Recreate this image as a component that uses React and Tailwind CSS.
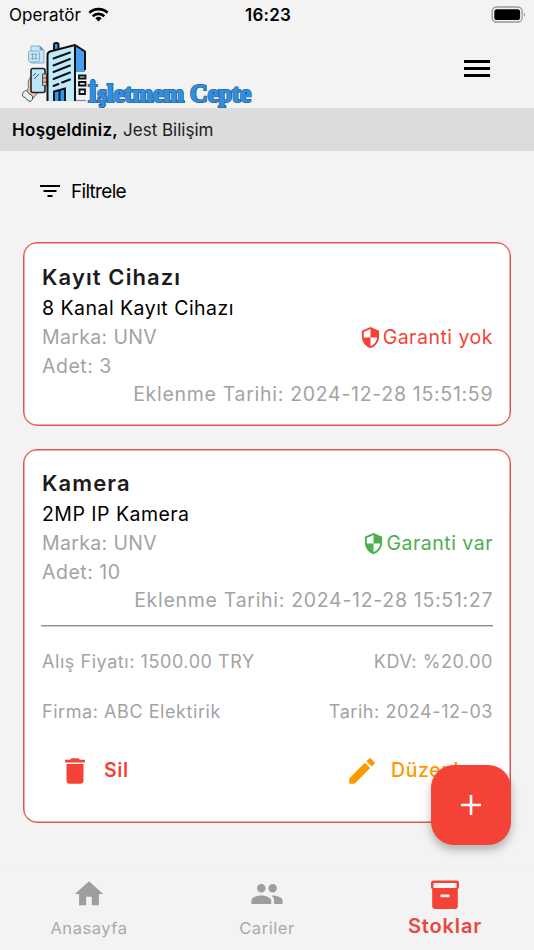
import React from "react";

function Icon({ className, children, viewBox = "0 0 24 24" }) {
  return (
    <svg viewBox={viewBox} className={className} fill="currentColor" aria-hidden="true">
      {children}
    </svg>
  );
}

function StatusBar() {
  return (
    <div className="flex h-[31px] items-center justify-between pl-[9px] pr-[7px] text-black">
      <div className="flex w-[120px] items-center gap-[7px]">
        <span className="text-[17px] tracking-[0.1px]">Operatör</span>
        <svg viewBox="0 0 22 16" className="mb-[2px] h-[15px] w-[21px]" fill="none" stroke="#000" strokeWidth="2.9">
          <path d="M1.3 6.2a14 14 0 0 1 19.4 0" />
          <path d="M4.8 9.8a9 9 0 0 1 12.4 0" />
          <path d="M7.6 11.9a5 5 0 0 1 6.8 0L11 15.5z" fill="#000" stroke="none" />
        </svg>
      </div>
      <span className="text-[17px] font-semibold tracking-[0.2px]">16:23</span>
      <div className="flex w-[120px] items-center justify-end pb-[3px]">
        <svg viewBox="0 0 36 17" className="h-[17px] w-9">
          <rect x="1.2" y="1" width="30" height="15" rx="4.5" fill="none" stroke="#999" strokeWidth="1.3" />
          <rect x="3.3" y="3.2" width="25.8" height="10.8" rx="2.6" fill="#000" />
          <path d="M33 6.5v4.400c1.400-.6 1.400-3.800 0-4.400z" fill="#999" />
        </svg>
      </div>
    </div>
  );
}

function Logo() {
  return (
    <svg viewBox="0 0 240 70" className="h-[70px] w-[240px]">
      <g stroke="#7fa9bd" strokeWidth="0.9" fill="#c4e8f8">
        <path d="M16 8h9l4 4v13h-13z" />
        <path d="M25 8v4h4z" fill="#4a9be0" />
        <rect x="13.500" y="13" width="11" height="11" rx="2" />
        <path d="M15.500 16.500h7M15.500 20.500h7M17.500 15v7M21 15v7" fill="none" />
      </g>
      <path d="M15.500 39c-2 3-3 5-2 10l-2 6 6 6 5-6 5-2V42z" fill="#f8c3ae" stroke="#555" strokeWidth="0.8" />
      <path d="M9.500 53c3-2 3 2 5 3s4 2 3 5-4 3-6 0-4-1-4-4c0-2 1-3 2-4z" fill="#e3f5fc" stroke="#333" strokeWidth="0.9" />
      <rect x="16" y="30.500" width="14" height="24" rx="2" fill="#b9e7f8" stroke="#222" strokeWidth="1.600" />
      <path d="M18 38l3-3M19 41l5-5" stroke="#446" strokeWidth="0.9" />
      <path d="M27.500 36h4v11.500h-4zM27.500 40h4M27.500 44h4" fill="#f8b49c" stroke="#444" strokeWidth="0.9" />
      <rect x="39" y="5" width="4.500" height="9" rx="1.800" fill="#3297ee" stroke="#111" strokeWidth="1.900" />
      <path d="M32.500 63V17c0-2 1-3 2.500-3.500L60 7v56z" fill="#bfeafb" />
      <path d="M60 7l10 7v20H60z" fill="#459ff0" />
      <path d="M60 34h10v29H60z" fill="#e8f2f8" />
      <path d="M32.500 63V17c0-2 1-3 2.500-3.500L60 7l10 6.500V32M60 7v56" fill="none" stroke="#111" strokeWidth="2" strokeLinejoin="round" />
      <path d="M38.500 20.500L55 14.500M38.500 27.500L55 21M38.500 34L55 27.500M38.500 41L55 34.500M38.500 48l5-2M47 44.500l8-3" fill="none" stroke="#111" strokeWidth="2" strokeLinecap="round" />
      <path d="M39 63V53.500l11-3v12.500M44.500 52V63" fill="#3297ee" stroke="#111" strokeWidth="1.900" />
      <path d="M64 37.500v3h6.500v-3zM64 44v3.500h6.500V44zM64.500 51.500h5.500v4.500h-5.500z" fill="none" stroke="#111" strokeWidth="1.800" />
      <path d="M61 62.500h10" stroke="#888" strokeWidth="1.200" />
      <text
        x="73"
        y="64"
        textLength="163"
        lengthAdjust="spacingAndGlyphs"
        fontFamily="Liberation Serif, serif"
        fontWeight="700"
        fontSize="25"
        fill="#2f90e0"
        stroke="#24507c"
        strokeWidth="2.200"
        paintOrder="stroke"
      >
        İşletmem Cepte
      </text>
      <text
        x="73"
        y="64"
        textLength="163"
        lengthAdjust="spacingAndGlyphs"
        fontFamily="Liberation Serif, serif"
        fontWeight="700"
        fontSize="25"
        fill="#2f90e0"
        stroke="#2f90e0"
        strokeWidth="0.8"
        aria-hidden="true"
      >
        İşletmem Cepte
      </text>
    </svg>
  );
}

function Header() {
  return (
    <header className="flex h-[77px] items-start justify-between pl-[15px] pr-[44px] pt-[7px]">
      <Logo />
      <button aria-label="Menü" className="mt-[22px] flex w-[26px] flex-col gap-1">
        <span className="h-[3px] bg-black" />
        <span className="h-[3px] bg-black" />
        <span className="h-[3px] bg-black" />
      </button>
    </header>
  );
}

function ItemSummary({ title, name, count, date, warranty }) {
  return (
    <div className="text-[19.5px] leading-[28.5px] tracking-[0.35px] text-[#a3a3a3]">
      <h2 className="h-[32px] text-[22px] font-semibold leading-[32px] tracking-[1.1px] text-[#1d1b20]">{title}</h2>
      <p className="pt-px tracking-[0.47px] text-black">{name}</p>
      <div className="flex h-[29px] justify-between">
        <span>Marka: UNV</span>
        <span className={warranty ? "-mr-px flex items-center tracking-[0.5px] text-[#4caf50]" : "-mr-px flex items-center tracking-[0.5px] text-[#f44336]"}>
          <Icon className="mr-px h-[23px] w-[23px]">
            <path d="M12 1L3 5v6c0 5.550 3.840 10.740 9 12 5.160-1.260 9-6.450 9-12V5l-9-4zm0 10.990h7c-.53 4.120-3.280 7.790-7 8.940V12H5V6.300l7-3.110v8.800z" />
          </Icon>
          {warranty ? "Garanti var" : "Garanti yok"}
        </span>
      </div>
      <p className="tracking-[0.5px]">Adet: {count}</p>
      <p className="-mr-[1.2px] text-right tracking-[0.7px]">Eklenme Tarihi: {date}</p>
    </div>
  );
}

function NavItem({ label, active, children }) {
  return (
    <div className={active ? "flex flex-1 flex-col items-center text-[#f44336]" : "flex flex-1 flex-col items-center text-[#9e9e9e]"}>
      {children}
      <span className={active ? "pt-px text-[20px] font-semibold leading-6 tracking-[0.85px] text-[#e8483d]" : "pt-[5px] text-[16.5px] leading-6 tracking-[0.55px] text-[#aaa]"}>
        {label}
      </span>
    </div>
  );
}

export default function App() {
  return (
    <div className="relative flex h-[950px] w-[534px] flex-col overflow-hidden bg-[#f3f3f3] font-['Inter',sans-serif]">
      <StatusBar />
      <Header />
      <div className="flex h-[43px] items-center bg-[#dcdcdc] px-3 pt-[2px] text-[17px] text-[#222]">
        <b className="font-semibold tracking-[0.3px] text-black">Hoşgeldiniz,</b>
        <span className="pl-[5px]">Jest Bilişim</span>
      </div>
      <div className="flex h-[91px] items-start pl-[40px] pt-[27px] text-black">
        <svg viewBox="0 0 20 14" className="mt-[6px] h-[14px] w-5">
          <path d="M0 1h20v2H0zM3.500 6h13v2h-13zM7.500 11h5v2h-5z" />
        </svg>
        <span className="pl-[11px] text-[19px] leading-7 tracking-[-0.7px]">Filtrele</span>
      </div>
      <main className="flex flex-1 flex-col gap-[23px] px-[23px]">
        <section className="h-[184px] rounded-[14px] border border-[#e2554c] bg-white px-[18px] pt-[18px] shadow-[inset_0_0_0_0.5px_#e2554c]">
          <ItemSummary title="Kayıt Cihazı" name="8 Kanal Kayıt Cihazı" count="3" date="2024-12-28 15:51:59" />
        </section>
        <section className="h-[374px] rounded-[14px] border border-[#e2554c] bg-white px-[18px] pt-[17px] shadow-[inset_0_0_0_0.5px_#e2554c]">
          <ItemSummary title="Kamera" name="2MP IP Kamera" count="10" date="2024-12-28 15:51:27" warranty />
          <hr className="-mx-px mt-[10px] border-t border-[#8e8e8e] shadow-[0_0.5px_0_#9e9e9e]" />
          <div className="-mr-px mt-[24px] flex justify-between text-[18px] leading-6 tracking-[0.56px] text-[#a3a3a3]">
            <span>Alış Fiyatı: 1500.00 TRY</span>
            <span>KDV: %20.00</span>
          </div>
          <div className="-mr-px mt-[26px] flex justify-between text-[18px] leading-6 tracking-[0.56px] text-[#a3a3a3]">
            <span>Firma: ABC Elektirik</span>
            <span>Tarih: 2024-12-03</span>
          </div>
          <div className="mt-[30px] flex h-[34px] items-center text-[19.500px] tracking-[0.6px]">
            <Icon className="ml-[16px] h-[34px] w-[34px] text-[#f44336]">
              <path d="M6 19c0 1.100.9 2 2 2h8c1.100 0 2-.9 2-2V7H6v12zM19 4h-3.500l-1-1h-5l-1 1H5v2h14V4z" />
            </Icon>
            <span className="w-[257px] pl-[12px] font-semibold text-[#f44336]">Sil</span>
            <Icon className="-ml-[4px] h-[34px] w-[34px] shrink-0 text-[#ff9800]">
              <path d="M3 17.250V21h3.750L17.810 9.940l-3.750-3.750L3 17.250zM20.710 7.040c.39-.39.39-1.020 0-1.410l-2.340-2.340c-.39-.39-1.020-.39-1.410 0l-1.830 1.830 3.750 3.750 1.830-1.830z" />
            </Icon>
            <span className="pl-[12px] font-medium text-[#ff9800]">Düzenle</span>
          </div>
        </section>
      </main>
      <nav className="flex h-[85px] shrink-0 border-t border-[#f0f0f0] pt-[11px]">
        <NavItem label="Anasayfa">
          <Icon className="h-[34px] w-[34px]">
            <path d="M10 20v-6h4v6h5v-8h3L12 3 2 12h3v8z" />
          </Icon>
        </NavItem>
        <NavItem label="Cariler">
          <Icon className="h-[34px] w-[34px]">
            <path d="M16 11c1.660 0 2.990-1.340 2.990-3S17.660 5 16 5c-1.660 0-3 1.340-3 3s1.340 3 3 3zm-8 0c1.660 0 2.990-1.340 2.990-3S9.660 5 8 5C6.340 5 5 6.340 5 8s1.340 3 3 3zm0 2c-2.330 0-7 1.170-7 3.500V19h14v-2.500c0-2.330-4.670-3.500-7-3.500zm8 0c-.29 0-.62.020-.97.050 1.160.84 1.970 1.970 1.970 3.450V19h6v-2.500c0-2.330-4.670-3.500-7-3.500z" />
          </Icon>
        </NavItem>
        <NavItem label="Stoklar" active>
          <svg viewBox="0 0 28 29" className="mb-[4px] mt-[3px] h-[29px] w-7">
            <path fill="currentColor" fillRule="evenodd" d="M2.500.5h23A2.500 2.500 0 0 1 28 3v4c0 1-.6 1.700-1.200 2v17a3 3 0 0 1-3 3H4.200a3 3 0 0 1-3-3V9C.6 8.700 0 8 0 7V3A2.500 2.500 0 0 1 2.500.5zM2.500 3v5h23V3zM9.500 14.500v2.800h9v-2.800z" />
          </svg>
        </NavItem>
      </nav>
      <button aria-label="Ekle" className="absolute left-[431px] top-[765px] flex h-20 w-20 items-center justify-center rounded-[23px] bg-[#f44336] text-white shadow-[0_5px_10px_rgba(0,0,0,0.28)]">
        <svg viewBox="0 0 20 20" className="h-5 w-5">
          <path d="M10 0v20M0 10h20" stroke="currentColor" strokeWidth="2.600" />
        </svg>
      </button>
    </div>
  );
}
